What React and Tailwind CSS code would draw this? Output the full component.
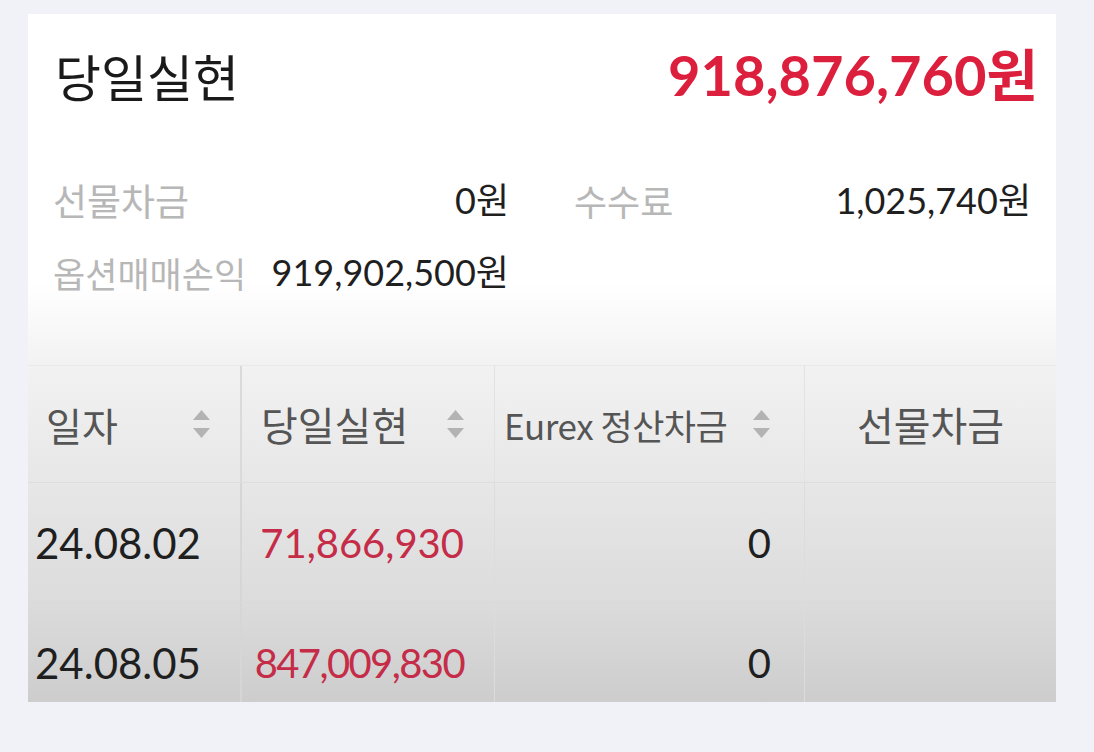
const KR = "font-['Noto_Sans_CJK_KR','Noto_Sans',sans-serif]";
const NUM = "font-['Lato','Noto_Sans_CJK_KR',sans-serif]";

// up/down sort arrows in the table header
function SortIcon() {
  return (
    <svg width="19" height="32" viewBox="0 0 19 32" className="shrink-0">
      <path d="M9.5 2 L18 12 L1 12 Z" fill="#b3b3b3" />
      <path d="M1 20 L18 20 L9.5 30 Z" fill="#b3b3b3" />
    </svg>
  );
}

function SummaryItem({ label, value, labelClass = 'text-[36px]' }) {
  return (
    <div className="flex items-center justify-between h-[72px]">
      <span className={`${KR} ${labelClass} text-[#b7b7b7] leading-none`}>{label}</span>
      <span className={`${NUM} text-[36px] text-[#1f1f1f] leading-none`}>{value}</span>
    </div>
  );
}

const rows = [
  { date: '24.08.02', realized: '71,866,930', fit: '', eurex: '0' },
  { date: '24.08.05', realized: '847,009,830', fit: 'tracking-[-1.6px]', eurex: '0' },
];

export default function App() {
  return (
    <div className="w-full h-[752px] bg-[#f0f2f7] pt-[14px] pl-[28px]">
      <div className="w-[1028px] h-[688px] overflow-hidden flex flex-col bg-[linear-gradient(to_bottom,#ffffff_0%,#ffffff_39%,#f2f2f2_51%,#e7e7e7_68%,#dcdcdc_85%,#cdcdcd_100%)]">
        {/* title + total */}
        <div className="shrink-0 flex items-center justify-between h-[122px] pl-[27px] pr-[18px]">
          <h1 className={`${KR} text-[50px] text-[#1a1a1a] leading-none`}>당일실현</h1>
          <span className={`${NUM} text-[56px] font-bold text-[#dd1f3e] leading-none`}>918,876,760원</span>
        </div>

        {/* breakdown */}
        <div className="shrink-0 mt-[28px] pl-[25px] pr-[25px] grid grid-cols-[456px_457px] gap-x-[65px]">
          <SummaryItem label="선물차금" value="0원" labelClass="text-[37px]" />
          <SummaryItem label="수수료" value="1,025,740원" />
          <SummaryItem label="옵션매매손익" value="919,902,500원" labelClass="text-[35px]" />
        </div>

        {/* table */}
        <div className="shrink-0 mt-[57px] border-t border-[#e9e9e9]">
          <div className="grid grid-cols-[214px_253px_310px_251px] h-[117px] border-b border-[#dedede]">
            <div className="flex items-center justify-between pl-[18px] pr-[29px] border-r-2 border-[#dadada]">
              <span className={`${KR} text-[39px] text-[#555] leading-none`}>일자</span>
              <SortIcon />
            </div>
            <div className="flex items-center justify-between pl-[19px] pr-[29px] border-r border-[#e2e2e2]">
              <span className={`${KR} text-[40px] text-[#555] leading-none`}>당일실현</span>
              <SortIcon />
            </div>
            <div className="flex items-center justify-between pl-[9px] pr-[33px] border-r border-[#e2e2e2]">
              <span className={`${KR} text-[35px] text-[#555] leading-none tracking-[-0.5px]`}>Eurex 정산차금</span>
              <SortIcon />
            </div>
            <div className="flex items-center justify-center">
              <span className={`${KR} text-[40px] text-[#555] leading-none`}>선물차금</span>
            </div>
          </div>
          {rows.map((r) => (
            <div key={r.date} className="grid grid-cols-[214px_253px_310px_251px] h-[120px] border-b border-[#d9d9d9]">
              <div className="flex items-center pl-[7px] border-r-2 border-[#d6d6d6]">
                <span className={`${NUM} text-[42px] text-[#1f1f1f] leading-none`}>{r.date}</span>
              </div>
              <div className="flex items-center justify-end pr-[30px] border-r border-[#dcdcdc]">
                <span className={`${NUM} text-[40px] text-[#c52c47] leading-none ${r.fit}`}>{r.realized}</span>
              </div>
              <div className="flex items-center justify-end pr-[33px] border-r border-[#dcdcdc]">
                <span className={`${NUM} text-[40px] text-[#1f1f1f] leading-none`}>{r.eurex}</span>
              </div>
              <div />
            </div>
          ))}
        </div>
      </div>
    </div>
  );
}
